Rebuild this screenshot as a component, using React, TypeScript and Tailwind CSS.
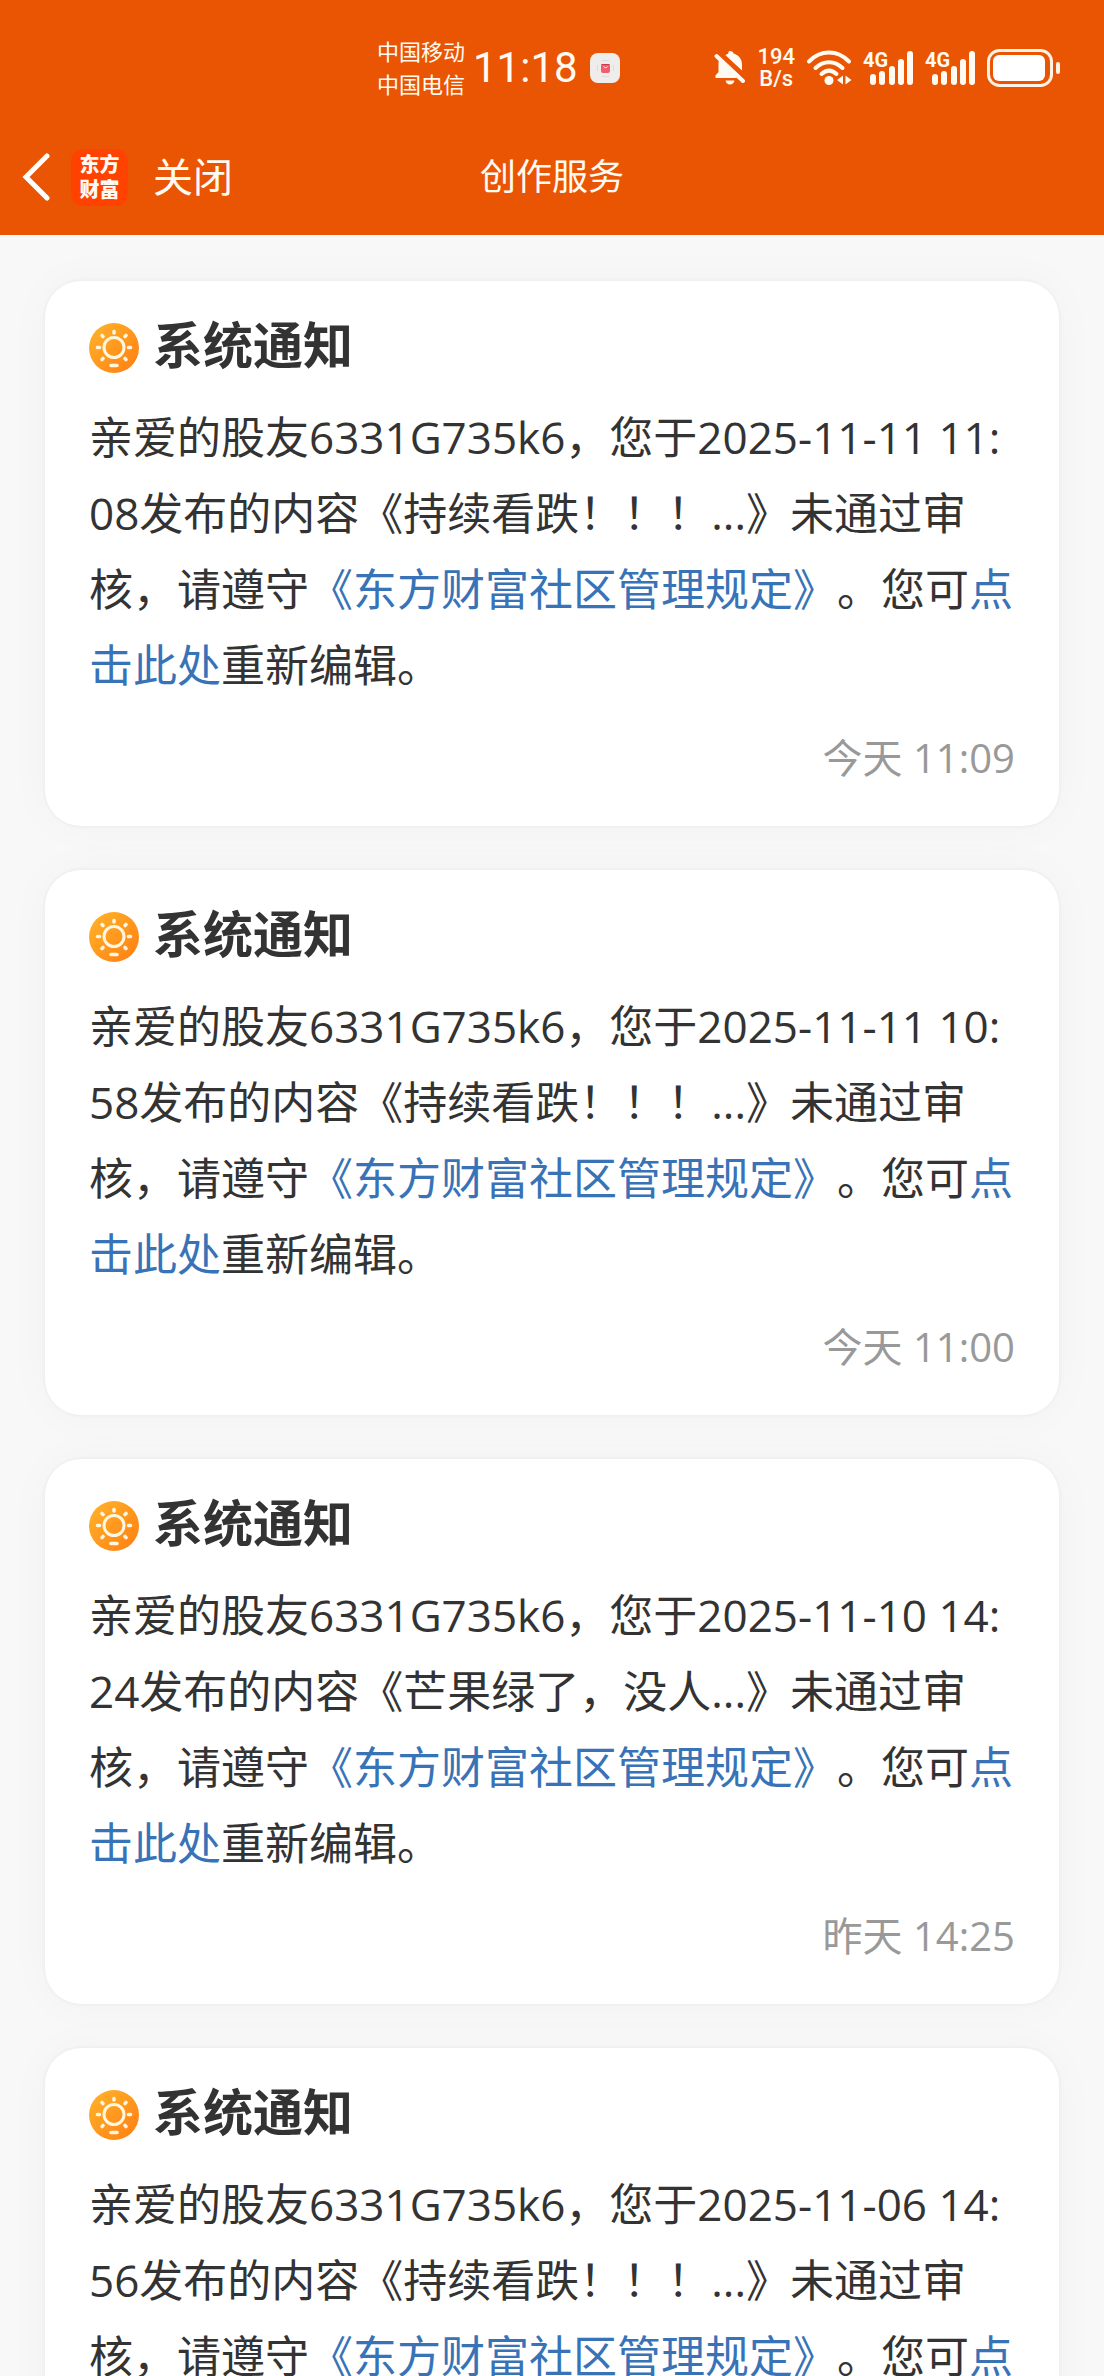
type Notice = {
  id: number;
  date: string;
  excerpt: string;
  time: string;
};

const notices: Notice[] = [
  { id: 1, date: "2025-11-11 11:08", excerpt: "持续看跌！！！...", time: "今天 11:09" },
  { id: 2, date: "2025-11-11 10:58", excerpt: "持续看跌！！！...", time: "今天 11:00" },
  { id: 3, date: "2025-11-10 14:24", excerpt: "芒果绿了，没人...", time: "昨天 14:25" },
  { id: 4, date: "2025-11-06 14:56", excerpt: "持续看跌！！！...", time: "11-06 14:57" },
];

const BellOffIcon = () => (
  <svg width="32" height="36" viewBox="0 0 32 36" fill="#fffaf2">
    <path d="M16 1c2 0 3.200 1 3.600 2.600C25 5.200 28 9.500 28 14.500v6L11.500 5.200c.9-.7 1.700-1.200 2.900-1.600C14.200 2 14.500 1 16 1z" />
    <path d="M5.500 9 25 28H1.500v-2.500L4.500 22v-8c0-2 .2-3.500 1-5z" />
    <path d="M11.500 30.500h9c-.6 2.600-2.200 4-4.500 4s-3.900-1.400-4.500-4z" />
    <path d="M5 3.500 31.500 28.500" stroke="#ea5504" strokeWidth="2.500" />
    <path d="M2.500 6 29 31" stroke="#fffaf2" strokeWidth="4" strokeLinecap="round" />
  </svg>
);

const WifiIcon = () => (
  <svg width="46" height="36" viewBox="0 0 46 36" fill="none" stroke="#fffaf2" strokeWidth="4" strokeLinecap="round">
    <path d="M3 11.500C14.500-.5 31.500-.5 43 11.500" />
    <path d="M9.500 18c8-7.800 19-7.800 27 0" />
    <path d="M15.500 24c4.800-4.400 10.200-4.400 15 0" />
    <circle cx="23" cy="30.500" r="4.500" fill="#fffaf2" stroke="none" />
    <path d="M37 25.500v9l-6-4.500zM39.500 25.500v9l6-4.500z" fill="#fffaf2" stroke="none" />
  </svg>
);

const SignalIcon = () => (
  <svg width="51" height="36" viewBox="0 0 51 36" fill="#fffaf2">
    <text x="0" y="17" fontSize="20" className="font-[Roboto] font-bold">
      4G
    </text>
    <rect x="7" y="24" width="6" height="11" rx="3" />
    <rect x="16" y="21" width="6" height="14" rx="3" />
    <rect x="26" y="16" width="6" height="19" rx="3" />
    <rect x="35" y="9" width="6" height="26" rx="3" />
    <rect x="44" y="1" width="6" height="34" rx="3" />
  </svg>
);

const BatteryIcon = () => (
  <svg width="74" height="38" viewBox="0 0 74 38">
    <rect x="1.500" y="1.500" width="63" height="35" rx="11" fill="none" stroke="#fff3e6" strokeWidth="3" />
    <rect x="6" y="6" width="52" height="26" rx="6" fill="#fff" />
    <rect x="69" y="13" width="4" height="12" rx="2" fill="#fff3e6" />
  </svg>
);

const RecorderIcon = () => (
  <svg width="30" height="30" viewBox="0 0 30 30">
    <rect width="30" height="30" rx="8" fill="#efedec" />
    <path d="M12 7.500h7M12 23.500h7M7.500 12v6M23.500 12v6" stroke="#dcdcdc" strokeWidth="1" />
    <rect x="11" y="11" width="9" height="9" rx="2" fill="#ee5f6b" />
    <path d="M11.500 11.500h8" stroke="#c93c4a" strokeWidth="1" />
    <path d="M13.500 13.500c1 1.500 3 1.500 4 0" fill="none" stroke="#fff" strokeWidth="1" />
  </svg>
);

const NoticeIcon = () => (
  <svg width="50" height="50" viewBox="0 0 50 50" className="shrink-0">
    <defs>
      <linearGradient id="sun" x1="0" y1="0" x2="1" y2="1">
        <stop offset="0" stopColor="#ffb52b" />
        <stop offset="1" stopColor="#ff7d12" />
      </linearGradient>
    </defs>
    <circle cx="25" cy="25" r="25" fill="url(#sun)" />
    <g fill="none" stroke="#fff6e0" strokeLinecap="round">
      <circle cx="25" cy="24.500" r="10" strokeWidth="3" />
      <path
        d="M25 8.500v1.500M13 12.500l1 1M37 12.500l-1 1M8.500 24.500h2M39.500 24.500h2M13 36.500l1-1M37 36.500l-1-1"
        strokeWidth="3.600"
      />
      <path d="M22 42.500h6" strokeWidth="3.600" />
    </g>
  </svg>
);

const StatusBar = () => (
  <div className="flex h-[135px] items-center justify-between pl-[377px] pr-[43px]">
    <div className="flex items-center">
      <div className="text-[22px] leading-[33px]">
        <p>中国移动</p>
        <p>中国电信</p>
      </div>
      <span className="ml-2 mr-3 font-[Roboto] text-[42px] leading-[50px]">11:18</span>
      <RecorderIcon />
    </div>
    <div className="flex items-center gap-[11px]">
      <BellOffIcon />
      <div className="text-center font-[Roboto] text-[22px] leading-[22px] font-medium">
        <p>194</p>
        <p>B/s</p>
      </div>
      <WifiIcon />
      <SignalIcon />
      <SignalIcon />
      <BatteryIcon />
    </div>
  </div>
);

const NavBar = () => (
  <div className="grid h-[100px] grid-cols-[1fr_auto_1fr] items-start px-[22px]">
    <div className="flex h-[84px] items-center">
      <button type="button" aria-label="返回">
        <svg width="28" height="48" viewBox="0 0 28 48" fill="none" stroke="#fff" strokeWidth="5">
          <path d="M25 3 4 24l21 21" strokeLinecap="round" />
        </svg>
      </button>
      <div className="ml-[21px] flex size-[57px] flex-col items-center justify-center rounded-xl bg-[#ff4200] text-[20px] leading-[25px] font-black">
        <span>东方</span>
        <span>财富</span>
      </div>
      <button type="button" className="ml-[25px] text-[40px] leading-[84px]">
        关闭
      </button>
    </div>
    <h1 className="text-[36px] leading-[84px]">创作服务</h1>
  </div>
);

const NoticeCard = ({ date, excerpt, time }: Notice) => (
  <article className="rounded-[36px] bg-white px-11 pt-[42px] pb-12 shadow-[0_0_4px_rgba(0,0,0,0.06),0_0_45px_rgba(0,0,0,0.03)]">
    <div className="flex items-start gap-[14px]">
      <NoticeIcon />
      <h2 className="text-[50px] leading-[44px] font-bold">系统通知</h2>
    </div>
    <p className="mt-[26px] text-[44px] leading-[76px] break-all">
      {`亲爱的股友6331G735k6，您于${date}发布的内容《${excerpt}》未通过审核，请遵守`}
      <a href="#rules" className="text-[#3873b8]">
        《东方财富社区管理规定》
      </a>
      。您可
      <a href="#edit" className="text-[#3873b8]">
        点击此处
      </a>
      重新编辑。
    </p>
    <p className="mt-[35px] text-right text-[40px] leading-[40px] text-[#999]">{time}</p>
  </article>
);

const App = () => {
  return (
    <div
      lang="zh-CN"
      className="flex h-screen flex-col bg-[#f8f8f8] font-['Open_Sans','Noto_Sans_CJK_SC',sans-serif] text-[#333] [text-spacing-trim:space-all]"
    >
      <header className="shrink-0 bg-[#ea5504] text-[#fffaf2]">
        <StatusBar />
        <NavBar />
      </header>
      <main className="flex min-h-0 flex-1 flex-col gap-11 overflow-y-auto px-[45px] py-[46px] [scrollbar-width:none]">
        {notices.map((notice) => (
          <NoticeCard key={notice.id} {...notice} />
        ))}
      </main>
    </div>
  );
};

export default App;
